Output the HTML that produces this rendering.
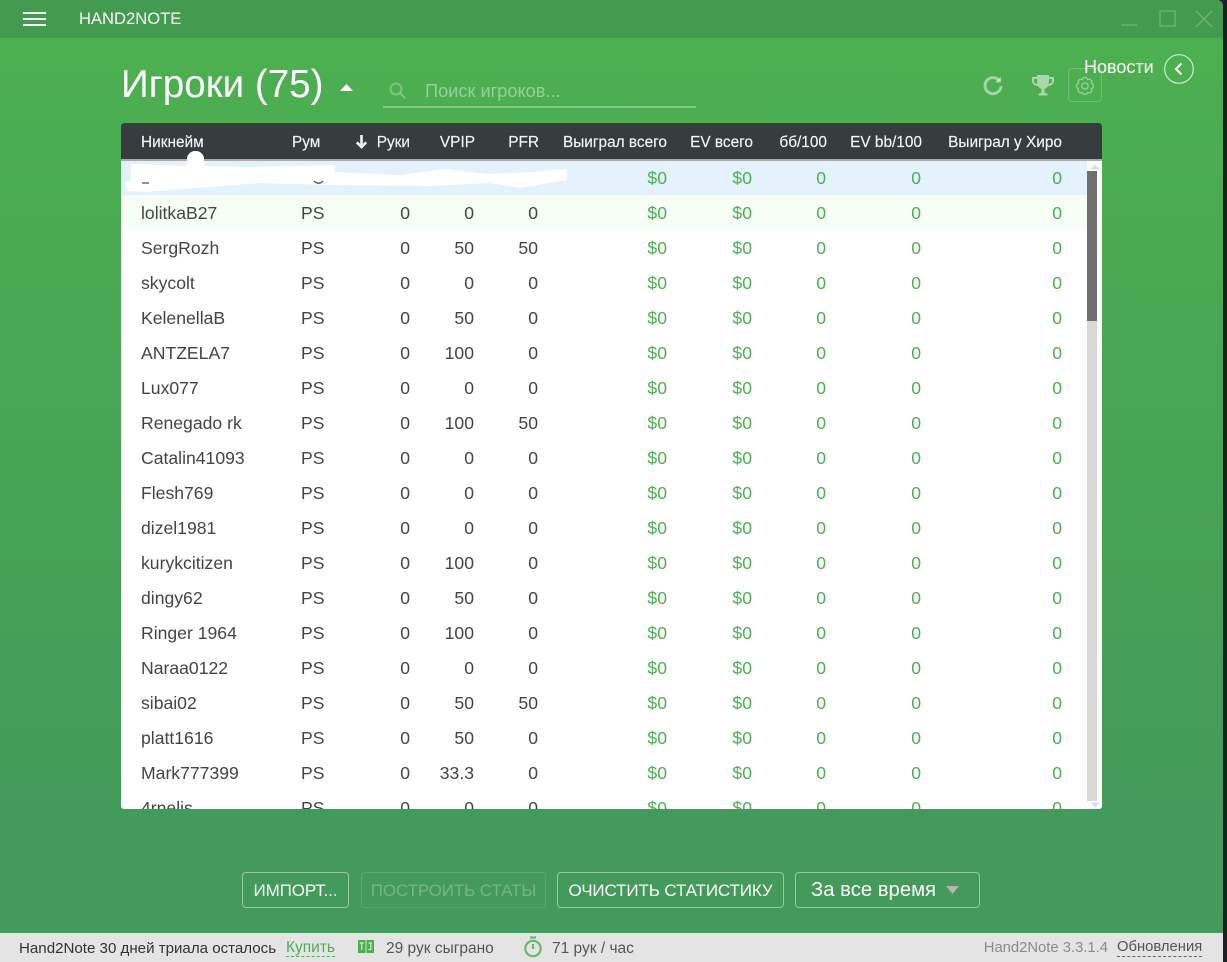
<!DOCTYPE html>
<html><head><meta charset="utf-8">
<style>
*{box-sizing:border-box;margin:0;padding:0}
html,body{width:1227px;height:962px;overflow:hidden;background:#1c1f26;font-family:"Liberation Sans",sans-serif}
.a{position:absolute;white-space:nowrap}
#win{position:absolute;left:0;top:0;width:1223px;height:962px;border-radius:0 6px 0 0;overflow:hidden;background:linear-gradient(#4caf50 38px,#4caf50 60px,#439a5a 830px,#439a5a)}
#bar{position:absolute;left:0;top:0;width:1223px;height:38px;background:#439b4f}
#tbl{position:absolute;left:121px;top:123px;width:981px;height:686px;background:#fff;border-radius:3px;overflow:hidden}
#hd{position:absolute;left:0;top:0;width:981px;height:38px;background:#373c3f;border-bottom:2px solid #aaa}
#hd span{position:absolute;top:11px;color:#f4f4f4;font-size:15.4px;line-height:18px;white-space:nowrap;-webkit-text-stroke:.15px #f4f4f4}
.r{position:absolute;left:0;width:966px;height:35px;font-size:17.6px;line-height:35px;color:#444}
.r span{position:absolute;top:1px;white-space:nowrap}
.n{left:20px}.p{left:180px}
.c1{right:677px}.c2{right:613px}.c3{right:549px}
.g{color:#4caf50}
.c4{right:420px}.c5{right:335px}.c6{right:261px}.c7{right:166px}.c8{right:25px}
.btn{position:absolute;top:872px;height:36px;border:1px solid rgba(255,255,255,.45);border-radius:4px;color:#fff;font-size:17px;line-height:35px;text-align:center;white-space:nowrap;letter-spacing:-.12px}
#st{position:absolute;left:0;top:933px;width:1223px;height:29px;background:#e4e4e4;font-size:15.5px;line-height:29px;color:#333}
#st span{position:absolute;top:1px;white-space:nowrap}
</style></head><body>
<div id="win">
<div id="bar"></div>
<div class="a" style="left:23px;top:12px;width:23px;height:2px;background:#fff"></div>
<div class="a" style="left:23px;top:18px;width:23px;height:2px;background:#fff"></div>
<div class="a" style="left:23px;top:24px;width:23px;height:2px;background:#fff"></div>
<div class="a" style="left:79px;top:9px;color:#fff;font-size:16.6px;line-height:20px">HAND2NOTE</div>
<svg class="a" style="left:1115px;top:4px" width="108" height="28" fill="none" stroke="#fff" stroke-opacity=".25" stroke-width="1.3"><path d="M6 21H22M45 7H60V22H45ZM81 7 97 23M97 7 81 23"/></svg>

<div class="a" style="left:121px;top:60px;color:#fff;font-size:38.6px;line-height:50px">Игроки (75)</div>
<svg class="a" style="left:340px;top:84px" width="13" height="8"><path d="M0 7 6.500 0 13 7Z" fill="#fff"/></svg>
<svg class="a" style="left:389px;top:82px" width="18" height="18" fill="none" stroke="#fff" stroke-opacity=".28" stroke-width="2"><circle cx="7" cy="7" r="5.500"/><path d="M11 11 16.500 16.500"/></svg>
<div class="a" style="left:425px;top:81px;color:rgba(255,255,255,.42);font-size:18.2px;line-height:21px">Поиск игроков...</div>
<div class="a" style="left:383px;top:106px;width:313px;height:2px;background:rgba(255,255,255,.32)"></div>

<svg class="a" style="left:982px;top:73px" width="22" height="24" fill="none" stroke="#fff" stroke-opacity=".48" stroke-width="3"><path d="M17.500 8A8 8 0 1 0 19 13"/><path d="M19 3.500V9.500H13" stroke="none" fill="#fff" fill-opacity=".48"/></svg>
<svg class="a" style="left:1031px;top:73px" width="24" height="24"><path d="M6 2H18V4H23V8C23 11 20 13 17 13C16 15 14 15.500 13.500 16V19C13.500 20 15 20.500 16.500 20.500V22.500H7.500V20.500C9 20.500 10.500 20 10.500 19V16C10 15.500 8 15 7 13C4 13 1 11 1 8V4H6ZM3 6V8C3 9.500 4.500 10.800 6.300 11L6 6ZM21 6H18L17.700 11C19.500 10.800 21 9.500 21 8Z" fill="#fff" fill-opacity=".52"/></svg>
<div class="a" style="left:1068px;top:68px;width:34px;height:34px;border:1px solid rgba(255,255,255,.2);border-radius:4px"></div>
<svg class="a" style="left:1074px;top:75px" width="22" height="22" viewBox="0 0 22 22" fill="none" stroke="#fff" stroke-opacity=".42" stroke-width="1.300"><circle cx="11" cy="11" r="3.200"/><path d="M17.470 13.680A2.800 2.800 0 0 1 13.680 17.470A2.800 2.800 0 0 1 8.320 17.470A2.800 2.800 0 0 1 4.530 13.680A2.800 2.800 0 0 1 4.530 8.320A2.800 2.800 0 0 1 8.320 4.530A2.800 2.800 0 0 1 13.680 4.530A2.800 2.800 0 0 1 17.470 8.320A2.800 2.800 0 0 1 17.470 13.680Z"/></svg>
<div class="a" style="left:1084px;top:57px;color:#fff;font-size:18px;line-height:20px">Новости</div>
<svg class="a" style="left:1164px;top:54px" width="30" height="30" fill="none" stroke="#fff"><circle cx="15" cy="15" r="14.300" stroke-opacity=".75" stroke-width="1.200"/><path d="M17.500 9.500 12 15 17.500 20.500" stroke-width="2"/></svg>

<div id="tbl">
<div class="r" style="top:37px;background:#e3f2fd"><span class="g c4">$0</span><span class="g c5">$0</span><span class="g c6">0</span><span class="g c7">0</span><span class="g c8">0</span></div>
<div class="r" style="top:72px;background:#f6fef6"><span class="n">lolitkaB27</span><span class="p">PS</span><span class="c1">0</span><span class="c2">0</span><span class="c3">0</span><span class="g c4">$0</span><span class="g c5">$0</span><span class="g c6">0</span><span class="g c7">0</span><span class="g c8">0</span></div>
<div class="r" style="top:107px"><span class="n">SergRozh</span><span class="p">PS</span><span class="c1">0</span><span class="c2">50</span><span class="c3">50</span><span class="g c4">$0</span><span class="g c5">$0</span><span class="g c6">0</span><span class="g c7">0</span><span class="g c8">0</span></div>
<div class="r" style="top:142px"><span class="n">skycolt</span><span class="p">PS</span><span class="c1">0</span><span class="c2">0</span><span class="c3">0</span><span class="g c4">$0</span><span class="g c5">$0</span><span class="g c6">0</span><span class="g c7">0</span><span class="g c8">0</span></div>
<div class="r" style="top:177px"><span class="n">KelenellaB</span><span class="p">PS</span><span class="c1">0</span><span class="c2">50</span><span class="c3">0</span><span class="g c4">$0</span><span class="g c5">$0</span><span class="g c6">0</span><span class="g c7">0</span><span class="g c8">0</span></div>
<div class="r" style="top:212px"><span class="n">ANTZELA7</span><span class="p">PS</span><span class="c1">0</span><span class="c2">100</span><span class="c3">0</span><span class="g c4">$0</span><span class="g c5">$0</span><span class="g c6">0</span><span class="g c7">0</span><span class="g c8">0</span></div>
<div class="r" style="top:247px"><span class="n">Lux077</span><span class="p">PS</span><span class="c1">0</span><span class="c2">0</span><span class="c3">0</span><span class="g c4">$0</span><span class="g c5">$0</span><span class="g c6">0</span><span class="g c7">0</span><span class="g c8">0</span></div>
<div class="r" style="top:282px"><span class="n">Renegado rk</span><span class="p">PS</span><span class="c1">0</span><span class="c2">100</span><span class="c3">50</span><span class="g c4">$0</span><span class="g c5">$0</span><span class="g c6">0</span><span class="g c7">0</span><span class="g c8">0</span></div>
<div class="r" style="top:317px"><span class="n">Catalin41093</span><span class="p">PS</span><span class="c1">0</span><span class="c2">0</span><span class="c3">0</span><span class="g c4">$0</span><span class="g c5">$0</span><span class="g c6">0</span><span class="g c7">0</span><span class="g c8">0</span></div>
<div class="r" style="top:352px"><span class="n">Flesh769</span><span class="p">PS</span><span class="c1">0</span><span class="c2">0</span><span class="c3">0</span><span class="g c4">$0</span><span class="g c5">$0</span><span class="g c6">0</span><span class="g c7">0</span><span class="g c8">0</span></div>
<div class="r" style="top:387px"><span class="n">dizel1981</span><span class="p">PS</span><span class="c1">0</span><span class="c2">0</span><span class="c3">0</span><span class="g c4">$0</span><span class="g c5">$0</span><span class="g c6">0</span><span class="g c7">0</span><span class="g c8">0</span></div>
<div class="r" style="top:422px"><span class="n">kurykcitizen</span><span class="p">PS</span><span class="c1">0</span><span class="c2">100</span><span class="c3">0</span><span class="g c4">$0</span><span class="g c5">$0</span><span class="g c6">0</span><span class="g c7">0</span><span class="g c8">0</span></div>
<div class="r" style="top:457px"><span class="n">dingy62</span><span class="p">PS</span><span class="c1">0</span><span class="c2">50</span><span class="c3">0</span><span class="g c4">$0</span><span class="g c5">$0</span><span class="g c6">0</span><span class="g c7">0</span><span class="g c8">0</span></div>
<div class="r" style="top:492px"><span class="n">Ringer 1964</span><span class="p">PS</span><span class="c1">0</span><span class="c2">100</span><span class="c3">0</span><span class="g c4">$0</span><span class="g c5">$0</span><span class="g c6">0</span><span class="g c7">0</span><span class="g c8">0</span></div>
<div class="r" style="top:527px"><span class="n">Naraa0122</span><span class="p">PS</span><span class="c1">0</span><span class="c2">0</span><span class="c3">0</span><span class="g c4">$0</span><span class="g c5">$0</span><span class="g c6">0</span><span class="g c7">0</span><span class="g c8">0</span></div>
<div class="r" style="top:562px"><span class="n">sibai02</span><span class="p">PS</span><span class="c1">0</span><span class="c2">50</span><span class="c3">50</span><span class="g c4">$0</span><span class="g c5">$0</span><span class="g c6">0</span><span class="g c7">0</span><span class="g c8">0</span></div>
<div class="r" style="top:597px"><span class="n">platt1616</span><span class="p">PS</span><span class="c1">0</span><span class="c2">50</span><span class="c3">0</span><span class="g c4">$0</span><span class="g c5">$0</span><span class="g c6">0</span><span class="g c7">0</span><span class="g c8">0</span></div>
<div class="r" style="top:632px"><span class="n">Mark777399</span><span class="p">PS</span><span class="c1">0</span><span class="c2">33.3</span><span class="c3">0</span><span class="g c4">$0</span><span class="g c5">$0</span><span class="g c6">0</span><span class="g c7">0</span><span class="g c8">0</span></div>
<div class="r" style="top:667px"><span class="n">4rnelis</span><span class="p">PS</span><span class="c1">0</span><span class="c2">0</span><span class="c3">0</span><span class="g c4">$0</span><span class="g c5">$0</span><span class="g c6">0</span><span class="g c7">0</span><span class="g c8">0</span></div>

<svg style="position:absolute;left:0;top:30px" width="460" height="44"><path d="M10 11 69 13 129 14 214 12V19L279 22 324 16 367 21 409 19 446 16V27L399 35 369 30 311 33 219 32 169 31 139 30 24 39 6 38 4 29 10 28Z" fill="#fff"/><path d="M21 30H28M193 28C196 31 199 31 202 28" stroke="#555" stroke-width="1.300" fill="none"/></svg>

<div id="hd">
<span style="left:20px">Никнейм</span>
<span style="left:171px">Рум</span>
<svg style="position:absolute;left:234px;top:11px" width="13" height="15" fill="none" stroke="#f4f4f4" stroke-width="2.600"><path d="M6.500 1V13M1.800 8.300 6.500 13 11.200 8.300"/></svg>
<span style="right:692px">Руки</span>
<span style="right:627px">VPIP</span>
<span style="right:563px">PFR</span>
<span style="right:435px">Выиграл всего</span>
<span style="right:349px">EV всего</span>
<span style="right:275px">бб/100</span>
<span style="right:180px">EV bb/100</span>
<span style="right:40px">Выиграл у Хиро</span>
</div>
<div style="position:absolute;left:967px;top:40px;width:14px;height:646px;background:#fff"></div>
<svg style="position:absolute;left:967px;top:40px" width="14" height="8"><path d="M2.500 6.500 7 1.500 11.500 6.500Z" fill="#dcdcdc"/></svg>
<div style="position:absolute;left:966px;top:48px;width:10px;height:150px;background:#6f6f6f"></div>
<div style="position:absolute;left:966px;top:198px;width:10px;height:480px;background:#d8d8d8"></div>
<svg style="position:absolute;left:967px;top:678px" width="14" height="8"><path d="M2.500 1.500 7 6.500 11.500 1.500Z" fill="#dcdcdc"/></svg>
</div>
<div class="a" style="left:187px;top:151px;width:17px;height:17px;background:#fff;border-radius:8px 8px 0 0"></div>

<div class="btn" style="left:242px;width:107px">ИМПОРТ...</div>
<div class="btn" style="left:361px;width:185px;border-color:rgba(255,255,255,.13);color:rgba(255,255,255,.27)">ПОСТРОИТЬ СТАТЫ</div>
<div class="btn" style="left:557px;width:227px">ОЧИСТИТЬ СТАТИСТИКУ</div>
<div class="btn" style="left:795px;width:185px;text-align:left;padding-left:15px;font-size:20.3px;letter-spacing:0">За все время</div>
<svg class="a" style="left:946px;top:886px" width="13" height="8"><path d="M0 0H13L6.500 8Z" fill="#b5b5b5"/></svg>

<div id="st">
<span style="left:19px;font-size:15.1px">Hand2Note 30 дней триала осталось</span>
<span style="left:286px;color:#4caf50;line-height:21px;top:4px;border-bottom:1px dashed #4caf50;height:20px">Купить</span>
<svg style="position:absolute;left:358px;top:7px" width="16" height="13"><rect width="7.500" height="13" fill="#4caf50"/><rect x="8.500" width="7.500" height="13" fill="#4caf50"/><path d="M1.800 3H5.700M3.750 3V10M10.500 3H13.800M12.800 3V9.500H10.500" stroke="#e4e4e4" fill="none" stroke-width="1.200"/></svg>
<span style="left:386px;color:#555">29 рук сыграно</span>
<svg style="position:absolute;left:523px;top:3px" width="20" height="22" fill="none" stroke="#66bb6a" stroke-width="2.200"><circle cx="10" cy="12.500" r="7.700"/><path d="M7 1.500H13M10 8V13"/></svg>
<span style="left:552px;color:#555">71 рук / час</span>
<span style="right:115px;color:#8a8a8a;font-size:14.8px">Hand2Note 3.3.1.4</span>
<span style="left:1117px;color:#555;line-height:21px;top:4px;border-bottom:1px dashed #666;height:20px;font-size:14.8px">Обновления</span>
</div>
</div>
</body></html>
